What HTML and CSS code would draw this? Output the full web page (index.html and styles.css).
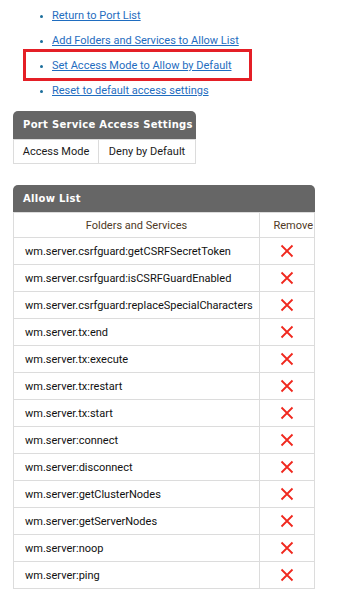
FILE: index.html
```html
<!DOCTYPE html>
<html>
<head>
<meta charset="utf-8">
<link rel="stylesheet" href="styles.css">
</head>
<body>
<ul class="links">
  <li><a href="#">Return to Port List</a></li>
  <li><a href="#">Add Folders and Services to Allow List</a></li>
  <li class="marked"><a href="#">Set Access Mode to Allow by Default</a></li>
  <li><a href="#">Reset to default access settings</a></li>
</ul>

<div class="panel panel-small">
  <div class="panel-head">Port Service Access Settings</div>
  <table class="grid">
    <tr><td class="c-mode">Access Mode</td><td class="c-val">Deny by Default</td></tr>
  </table>
</div>

<div class="panel panel-wide">
  <div class="panel-head">Allow List</div>
  <table class="grid allow">
    <tr class="colhead"><th class="c-name">Folders and Services</th><th class="c-rm">Remove</th></tr>
    <tr><td class="c-name">wm.server.csrfguard:getCSRFSecretToken</td><td class="c-rm"><svg class="x" viewBox="0 0 14 14"><path d="M1.5 1.5L12.5 12.5M12.5 1.5L1.5 12.5"/></svg></td></tr>
    <tr><td class="c-name">wm.server.csrfguard:isCSRFGuardEnabled</td><td class="c-rm"><svg class="x" viewBox="0 0 14 14"><path d="M1.5 1.5L12.5 12.5M12.5 1.5L1.5 12.5"/></svg></td></tr>
    <tr><td class="c-name">wm.server.csrfguard:replaceSpecialCharacters</td><td class="c-rm"><svg class="x" viewBox="0 0 14 14"><path d="M1.5 1.5L12.5 12.5M12.5 1.5L1.5 12.5"/></svg></td></tr>
    <tr><td class="c-name">wm.server.tx:end</td><td class="c-rm"><svg class="x" viewBox="0 0 14 14"><path d="M1.5 1.5L12.5 12.5M12.5 1.5L1.5 12.5"/></svg></td></tr>
    <tr><td class="c-name">wm.server.tx:execute</td><td class="c-rm"><svg class="x" viewBox="0 0 14 14"><path d="M1.5 1.5L12.5 12.5M12.5 1.5L1.5 12.5"/></svg></td></tr>
    <tr><td class="c-name">wm.server.tx:restart</td><td class="c-rm"><svg class="x" viewBox="0 0 14 14"><path d="M1.5 1.5L12.5 12.5M12.5 1.5L1.5 12.5"/></svg></td></tr>
    <tr><td class="c-name">wm.server.tx:start</td><td class="c-rm"><svg class="x" viewBox="0 0 14 14"><path d="M1.5 1.5L12.5 12.5M12.5 1.5L1.5 12.5"/></svg></td></tr>
    <tr><td class="c-name">wm.server:connect</td><td class="c-rm"><svg class="x" viewBox="0 0 14 14"><path d="M1.5 1.5L12.5 12.5M12.5 1.5L1.5 12.5"/></svg></td></tr>
    <tr><td class="c-name">wm.server:disconnect</td><td class="c-rm"><svg class="x" viewBox="0 0 14 14"><path d="M1.5 1.5L12.5 12.5M12.5 1.5L1.5 12.5"/></svg></td></tr>
    <tr><td class="c-name">wm.server:getClusterNodes</td><td class="c-rm"><svg class="x" viewBox="0 0 14 14"><path d="M1.5 1.5L12.5 12.5M12.5 1.5L1.5 12.5"/></svg></td></tr>
    <tr><td class="c-name">wm.server:getServerNodes</td><td class="c-rm"><svg class="x" viewBox="0 0 14 14"><path d="M1.5 1.5L12.5 12.5M12.5 1.5L1.5 12.5"/></svg></td></tr>
    <tr><td class="c-name">wm.server:noop</td><td class="c-rm"><svg class="x" viewBox="0 0 14 14"><path d="M1.5 1.5L12.5 12.5M12.5 1.5L1.5 12.5"/></svg></td></tr>
    <tr><td class="c-name">wm.server:ping</td><td class="c-rm"><svg class="x" viewBox="0 0 14 14"><path d="M1.5 1.5L12.5 12.5M12.5 1.5L1.5 12.5"/></svg></td></tr>
  </table>
</div>
</body>
</html>
```

FILE: styles.css
```css
html, body {
  margin: 0;
  padding: 0;
  background: #fff;
}
body {
  font-family: Roboto, "Liberation Sans", sans-serif;
  font-size: 11px;
  color: #222;
  padding: 4px 0 0 13px;
}
.links {
  margin: 0;
  padding: 0 0 0 39px;
  list-style: disc;
  color: #1b6e9b;
}
.links li {
  height: 25px;
  line-height: 24px;
  font-size: 11px;
}
.links li::marker {
  font-size: 9px;
}
.links a {
  color: #1f6dc0;
  text-decoration: underline;
}
.marked {
  position: relative;
}
.marked::before {
  content: "";
  position: absolute;
  left: -29px;
  top: -5px;
  width: 223px;
  height: 26px;
  border: 3px solid #e41f26;
}
.panel-small {
  width: 183px;
  margin-top: 7px;
}
.panel-wide {
  width: 302px;
  margin-top: 21px;
}
.panel-head {
  background: #666;
  color: #fff;
  font-family: "DejaVu Sans", Verdana, sans-serif;
  font-weight: bold;
  font-size: 10px;
  letter-spacing: 0.3px;
  height: 28px;
  line-height: 28px;
  padding-left: 10px;
  border-radius: 5px 5px 0 0;
  white-space: nowrap;
}
.panel-wide .panel-head {
  height: 27px;
  line-height: 27px;
}
.grid {
  border-collapse: collapse;
  width: 100%;
  font-size: 11px;
}
.grid td, .grid th {
  border: 1px solid #dcdcdc;
  padding: 0;
  font-weight: normal;
}
.panel-small .grid td {
  height: 23px;
  text-align: center;
  color: #1a1a1a;
}
.c-mode { width: 84px; }
.allow .colhead th {
  height: 24px;
  color: #4f3a26;
  text-align: center;
}
.allow td {
  height: 26px;
}
.allow td.c-name {
  padding-left: 11px;
  color: #111;
}
.allow .c-rm {
  width: 53px;
  text-align: center;
}
.allow .colhead th.c-rm {
  text-align: right;
  padding-right: 1px;
}
.x {
  width: 14px;
  height: 14px;
  display: block;
  margin: 0 auto;
  fill: none;
  stroke: #f0281e;
  stroke-width: 1.8;
}
```
